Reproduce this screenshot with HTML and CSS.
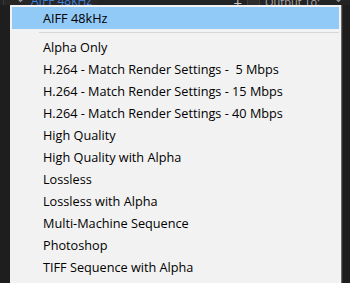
FILE: index.html
```html
<!DOCTYPE html>
<html>
<head>
<meta charset="utf-8">
<link rel="stylesheet" href="styles.css">
</head>
<body>
<div class="topbar">
  <div class="field">
    <svg class="chev" width="9" height="5" viewBox="0 0 9 5"><path d="M1 0 L4.5 3.5 L8 0" fill="none" stroke="#9a9a9a" stroke-width="1.2"/></svg>
    <span class="blue">AIFF 48kHz</span>
  </div>
  <div class="spacer"></div>
  <span class="plus">+</span>
  <span class="minus"></span>
  <span class="out">Output To:</span>
  <svg class="chev2" width="9" height="5" viewBox="0 0 9 5"><path d="M1 0 L4.5 3.5 L8 0" fill="none" stroke="#9a9a9a" stroke-width="1.2"/></svg>
</div>
<div class="menu">
  <div class="item active">AIFF 48kHz</div>
  <div class="sep"></div>
  <div class="item">Alpha Only</div>
  <div class="item">H.264 - Match Render Settings - &nbsp;5 Mbps</div>
  <div class="item">H.264 - Match Render Settings - 15 Mbps</div>
  <div class="item">H.264 - Match Render Settings - 40 Mbps</div>
  <div class="item">High Quality</div>
  <div class="item">High Quality with Alpha</div>
  <div class="item">Lossless</div>
  <div class="item">Lossless with Alpha</div>
  <div class="item">Multi-Machine Sequence</div>
  <div class="item">Photoshop</div>
  <div class="item">TIFF Sequence with Alpha</div>
</div>
</body>
</html>
```
FILE: styles.css
```css
html, body {
  margin: 0;
  padding: 0;
  background: #1e1e1e;
  overflow: hidden;
  height: 283px;
}
body {
  font-family: "Open Sans", "Noto Sans", sans-serif;
  font-size: 12.7px;
}
.topbar {
  height: 5px;
  overflow: hidden;
  display: flex;
  align-items: flex-end;
  background: #232323;
}
.field {
  display: flex;
  align-items: flex-end;
  margin-left: 3px;
  padding-left: 12px;
  width: 82px;
  height: 5px;
  background: #262626;
  border-left: 1px solid #3a3a3a;
}
.chev {
  margin-bottom: 2px;
}
.blue {
  color: #3d7fd8;
  font-size: 12px;
  line-height: 12px;
  margin-left: 6px;
  margin-bottom: -2px;
  white-space: nowrap;
}
.spacer { flex: 1; }
.plus {
  color: #c8c8c8;
  font-size: 15px;
  line-height: 15px;
  margin-bottom: -6px;
}
.minus {
  width: 11px;
  height: 5px;
  margin-left: 5px;
  background: #2d2d2d;
  border: 1px solid #3c3c3c;
  border-bottom: none;
}
.out {
  color: #a8a8a8;
  font-size: 11px;
  line-height: 11px;
  margin-left: 5px;
  margin-bottom: -2px;
  white-space: nowrap;
}
.chev2 {
  margin-left: 14px;
  margin-right: 7px;
  margin-bottom: 2px;
}
.menu {
  margin-left: 10px;
  width: 327px;
  padding: 2px;
  background: #f2f2f2;
  box-shadow: 1px 0 0 #6a6a6a, 2px 0 0 #2c2c2c;
  height: 300px;
}
.item {
  height: 22px;
  line-height: 23px;
  padding-left: 31px;
  color: #000;
  white-space: nowrap;
}
.item.active {
  background: #91c9f7;
}
.sep {
  height: 7px;
  margin-left: 27px;
  display: flex;
  align-items: center;
}
.sep::before {
  content: "";
  flex: 1;
  height: 1px;
  background: #d7d7d7;
}
```
